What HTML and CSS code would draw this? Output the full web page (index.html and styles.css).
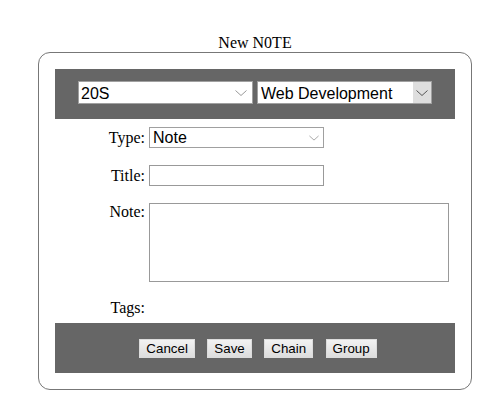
FILE: index.html
```html
<!DOCTYPE html>
<html>
<head>
<meta charset="utf-8">
<title>New N0TE</title>
<link rel="stylesheet" href="styles.css">
</head>
<body>
<div class="page">
  <div class="title">New N0TE</div>
  <div class="box">
    <div class="bar bar-top">
      <select class="sel sel-plain"><option>20S</option></select>
      <select class="sel sel-hover"><option>Web Development</option></select>
    </div>
    <div class="form">
      <label class="lbl">Type:</label>
      <select class="sel sel-type"><option>Note</option></select>
      <label class="lbl">Title:</label>
      <input class="txt" type="text">
      <label class="lbl lbl-top">Note:</label>
      <textarea class="area"></textarea>
      <label class="lbl">Tags:</label>
      <span></span>
    </div>
    <div class="bar bar-bottom">
      <button class="btn">Cancel</button>
      <button class="btn">Save</button>
      <button class="btn">Chain</button>
      <button class="btn">Group</button>
    </div>
  </div>
</div>
</body>
</html>
```

FILE: styles.css
```css
html, body {
  margin: 0;
  padding: 0;
  background: #ffffff;
}

body {
  font-family: "Liberation Serif", "Times New Roman", serif;
  font-size: 16px;
  color: #000;
}

.page {
  padding-top: 34px;
  margin-left: 38px;
  width: 434px;
}

.title {
  text-align: center;
  line-height: 18px;
  height: 18px;
}

.box {
  border: 1px solid #777;
  border-radius: 12px;
  padding: 16px 16px 16px 16px;
}

.bar {
  background: #666666;
  height: 50px;
  box-sizing: border-box;
}

.bar-top {
  display: flex;
  justify-content: center;
  gap: 4px;
  padding-top: 12px;
}

.sel {
  -webkit-appearance: none;
  appearance: none;
  box-sizing: border-box;
  width: 175px;
  height: 23px;
  margin: 0;
  border: 1px solid #a0a0a0;
  border-radius: 0;
  background-color: #fff;
  font-family: "Liberation Sans", Arial, sans-serif;
  font-size: 16px;
  color: #000;
  padding: 1px 20px 0 2px;
  line-height: 21px;
  background-image: url("data:image/svg+xml;utf8,<svg xmlns='http://www.w3.org/2000/svg' width='12' height='6' viewBox='0 0 12 6'><path d='M0.5 0.5 L6 5.5 L11.5 0.5' fill='none' stroke='%23999' stroke-width='1'/></svg>");
  background-repeat: no-repeat;
  background-position: right 5px center;
  background-size: 12px 6px;
}

.sel-hover {
  background-image:
    url("data:image/svg+xml;utf8,<svg xmlns='http://www.w3.org/2000/svg' width='12' height='6' viewBox='0 0 12 6'><path d='M0.5 0.5 L6 5.5 L11.5 0.5' fill='none' stroke='%23555' stroke-width='1'/></svg>"),
    linear-gradient(#dedede, #dedede);
  background-repeat: no-repeat, no-repeat;
  background-position: right 3px center, right 0 top 0;
  background-size: 12px 6px, 18px 100%;
  padding-left: 3px;
}

.form {
  display: grid;
  grid-template-columns: 90px 1fr;
  column-gap: 4px;
  row-gap: 17px;
  align-items: center;
  margin: 8px 0 6px 0;
}

.lbl {
  text-align: right;
  line-height: 18px;
}

.lbl-top {
  align-self: start;
}

.sel-type {
  height: 21px;
  line-height: 19px;
  padding-top: 0;
  padding-left: 3px;
  background-position: right 4px center;
  background-size: 10px 6px;
}

.txt {
  box-sizing: border-box;
  width: 175px;
  height: 21px;
  margin: 0;
  border: 1px solid #999;
  padding: 0 3px;
  font-family: "Liberation Sans", Arial, sans-serif;
  font-size: 13px;
}

.area {
  box-sizing: border-box;
  width: 300px;
  height: 79px;
  margin: 0;
  border: 1px solid #999;
  padding: 2px;
  resize: none;
  display: block;
  font-family: "Liberation Mono", monospace;
  font-size: 13px;
}

.bar-bottom {
  display: flex;
  justify-content: center;
  align-items: flex-start;
  gap: 12.5px;
  padding-top: 16px;
  padding-left: 6px;
}

.btn {
  font-family: "Liberation Sans", Arial, sans-serif;
  font-size: 13.33px;
  line-height: 15px;
  height: 19px;
  box-sizing: border-box;
  padding: 1px 6px;
  margin: 0;
  border: 1px solid #dcdcdc;
  border-radius: 0;
  background: linear-gradient(#f2f2f2, #dddddd);
  color: #000;
}
```
